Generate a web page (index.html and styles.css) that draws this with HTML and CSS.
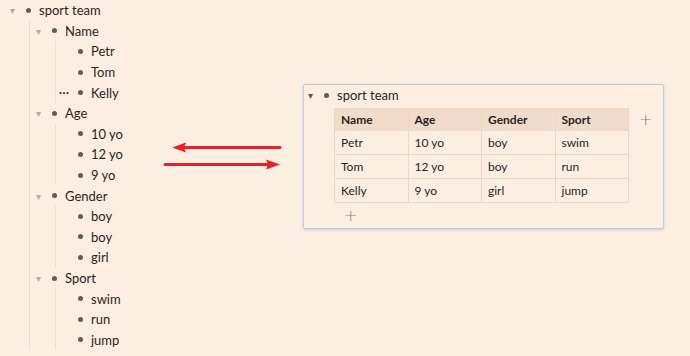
FILE: index.html
```html
<!DOCTYPE html>
<html lang="en">
<head>
    <meta charset="UTF-8">
    <meta name="viewport" content="width=device-width, initial-scale=1.0">
    <title>sport team</title>
    <link rel="stylesheet" href="styles.css">
</head>
<body>
    <div class="page">
        <div class="outline">
            <div class="node">
                <div class="row"><span class="toggle">&#9662;</span><span class="bullet"></span><span class="label">sport team</span></div>
                <div class="children">
                    <div class="node">
                        <div class="row"><span class="toggle">&#9662;</span><span class="bullet"></span><span class="label">Name</span></div>
                        <div class="children">
                            <div class="row"><span class="toggle"></span><span class="bullet"></span><span class="label">Petr</span></div>
                            <div class="row"><span class="toggle"></span><span class="bullet"></span><span class="label">Tom</span></div>
                            <div class="row"><span class="toggle more">&bull;&bull;&bull;</span><span class="bullet"></span><span class="label">Kelly</span></div>
                        </div>
                    </div>
                    <div class="node">
                        <div class="row"><span class="toggle">&#9662;</span><span class="bullet"></span><span class="label">Age</span></div>
                        <div class="children">
                            <div class="row"><span class="toggle"></span><span class="bullet"></span><span class="label">10 yo</span></div>
                            <div class="row"><span class="toggle"></span><span class="bullet"></span><span class="label">12 yo</span></div>
                            <div class="row"><span class="toggle"></span><span class="bullet"></span><span class="label">9 yo</span></div>
                        </div>
                    </div>
                    <div class="node">
                        <div class="row"><span class="toggle">&#9662;</span><span class="bullet"></span><span class="label">Gender</span></div>
                        <div class="children">
                            <div class="row"><span class="toggle"></span><span class="bullet"></span><span class="label">boy</span></div>
                            <div class="row"><span class="toggle"></span><span class="bullet"></span><span class="label">boy</span></div>
                            <div class="row"><span class="toggle"></span><span class="bullet"></span><span class="label">girl</span></div>
                        </div>
                    </div>
                    <div class="node">
                        <div class="row"><span class="toggle">&#9662;</span><span class="bullet"></span><span class="label">Sport</span></div>
                        <div class="children">
                            <div class="row"><span class="toggle"></span><span class="bullet"></span><span class="label">swim</span></div>
                            <div class="row"><span class="toggle"></span><span class="bullet"></span><span class="label">run</span></div>
                            <div class="row"><span class="toggle"></span><span class="bullet"></span><span class="label">jump</span></div>
                        </div>
                    </div>
                </div>
            </div>
        </div>

        <svg class="arrows" width="143" height="40" viewBox="0 0 143 40">
            <line x1="120" y1="12.5" x2="22" y2="12.5" stroke="#e8202a" stroke-width="3" stroke-linecap="round"/>
            <polygon points="12,12.5 26,7.5 24,12.5 26,17.5" fill="#e8202a"/>
            <line x1="5" y1="29.5" x2="110" y2="29.5" stroke="#e8202a" stroke-width="3" stroke-linecap="round"/>
            <polygon points="120,29.5 106,24.5 108,29.5 106,34.5" fill="#e8202a"/>
        </svg>

        <div class="panel">
            <div class="row panel-head"><span class="toggle dark">&#9662;</span><span class="bullet"></span><span class="label">sport team</span></div>
            <div class="table-wrap">
                <table class="grid">
                    <tr><th>Name</th><th>Age</th><th>Gender</th><th>Sport</th></tr>
                    <tr><td>Petr</td><td>10 yo</td><td>boy</td><td>swim</td></tr>
                    <tr><td>Tom</td><td>12 yo</td><td>boy</td><td>run</td></tr>
                    <tr><td>Kelly</td><td>9 yo</td><td>girl</td><td>jump</td></tr>
                </table>
                <span class="add add-col">+</span>
            </div>
            <span class="add add-row">+</span>
        </div>
    </div>
</body>
</html>
```

FILE: styles.css
```css
body {
    margin: 0;
    background: #fdeee2;
    color: #2b1f18;
    font-family: Lato, "Open Sans", sans-serif;
    font-size: 13px;
    height: 356px;
    overflow: hidden;
}
.page {
    display: flex;
    align-items: flex-start;
}
.outline {
    width: 156px;
    padding-left: 4px;
    flex-shrink: 0;
}
.row {
    display: flex;
    align-items: center;
    height: 20.6px;
}
.toggle {
    width: 16px;
    text-align: center;
    font-size: 10px;
    color: #bfa898;
}
.toggle.more {
    font-size: 6px;
    color: #5e4536;
}
.toggle.dark {
    color: #6e5343;
}
.bullet {
    width: 16px;
    display: flex;
    justify-content: center;
}
.bullet::before {
    content: "";
    width: 5px;
    height: 5px;
    border-radius: 50%;
    background: #745646;
}
.label {
    margin-left: 3px;
    white-space: nowrap;
}
.children {
    margin-left: 25px;
    border-left: 1px solid #efdccb;
}
.arrows {
    margin-top: 135px;
    flex-shrink: 0;
}
.panel {
    margin-top: 84px;
    width: 361px;
    height: 145px;
    box-sizing: border-box;
    border: 1px solid #b9cde9;
    border-radius: 2px;
    box-shadow: 0 1px 3px rgba(120, 150, 200, 0.35);
    flex-shrink: 0;
}
.panel-head {
    margin-left: -2px;
}
.table-wrap {
    display: flex;
    align-items: center;
    margin-left: 30px;
    margin-top: 2px;
}
.grid {
    border-collapse: collapse;
    font-size: 12px;
    width: 295px;
    table-layout: fixed;
}
.grid th,
.grid td {
    border: 1px solid #ecd7c5;
    text-align: left;
    padding: 0 6px;
}
.grid th {
    background: #f1dccb;
    font-weight: 700;
    height: 21px;
}
.grid td {
    height: 23px;
}
.table-wrap .add-col {
    margin-left: 10px;
    align-self: flex-start;
    margin-top: 2px;
}
.add {
    color: #8e7e74;
    font-family: "DejaVu Sans", sans-serif;
    font-size: 16px;
    font-weight: 300;
}
.add-row {
    display: block;
    margin: 3px 0 0 40px;
}
```
